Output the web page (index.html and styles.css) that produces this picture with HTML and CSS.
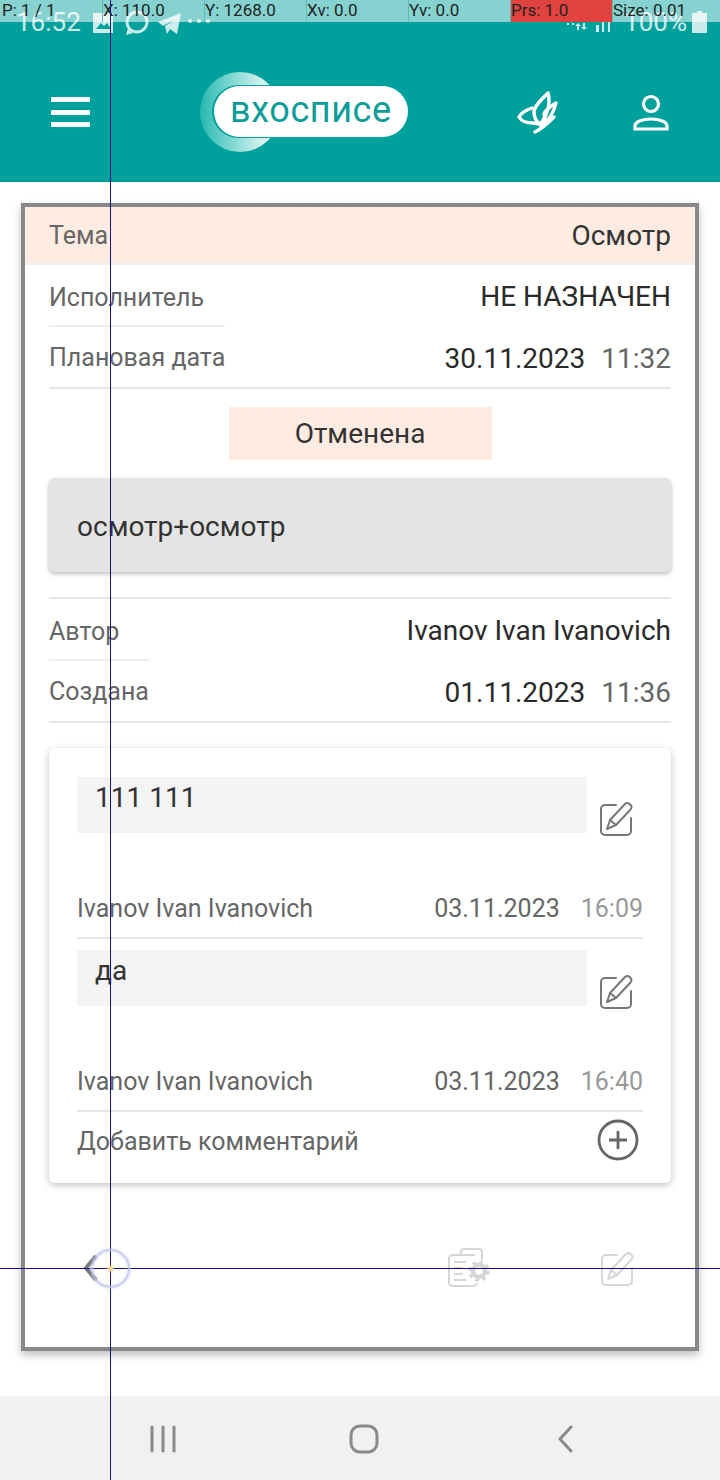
FILE: index.html
```html
<!DOCTYPE html>
<html lang="ru">
<head>
<meta charset="utf-8">
<title>Заявка</title>
<link rel="stylesheet" href="styles.css">
</head>
<body>
<div class="screen">
  <header class="app-header">
    <div class="status-bar">
      <span class="clock">16:52</span>
      <svg class="status-icons" width="92" height="28" viewBox="0 0 92 28">
        <path d="M0 5h20v20H0z" fill="#fff"/><path d="M3 21l5-6 3 3 3-3 4 6z" fill="#00a19d"/>
        <circle cx="44" cy="14" r="10" fill="none" stroke="#fff" stroke-width="2.800"/><path d="M33 27l2-7 5 5z" fill="#fff"/>
        <path d="M65 14L88 5l-4 21-7-5-3 5-2-8 11-7-13 7z" fill="#fff"/>
      </svg>
      <span class="dots"></span>
      <span class="dots"></span>
      <span class="dots"></span>
      <span class="status-spacer"></span>
      <svg class="signal" width="48" height="24" viewBox="0 0 48 24">
        <path d="M1 7q9-9 18 0M5 10q5-5 10 0" fill="none" stroke="#fff" stroke-width="2"/>
        <path d="M2 13h2v2H2zM7 13h2v2H7z" fill="#fff"/>
        <path d="M13 13l3 3h-2v4h-2v-4h-2zM19 20l-3-3h2v-4h2v4h2z" fill="#fff"/>
        <path d="M31 22h3v-7h-3zM37 22h2V10h-2zM43 22h2V7h-2z" fill="#fff"/>
      </svg>
      <span class="battery-text">100%</span>
      <svg class="battery" width="15" height="22" viewBox="0 0 15 22"><path d="M5 0h5v2h5v20H0V2h5z" fill="#fff"/></svg>
    </div>
    <button class="menu-btn" aria-label="Меню"><span></span><span></span><span></span></button>
    <svg class="logo" width="208" height="80" viewBox="0 0 208 80">
      <defs>
        <linearGradient id="ring" x1="0" x2="1" y1="0.5" y2="0.5">
          <stop offset="0" stop-color="#27b8ae"/><stop offset="0.25" stop-color="#5fcdc6"/><stop offset="0.85" stop-color="#e6f7f5"/>
        </linearGradient>
      </defs>
      <circle cx="40" cy="40" r="40" fill="url(#ring)"/>
      <rect x="12" y="13" width="197" height="53" rx="26.500" fill="#00a19d"/>
      <rect x="14" y="14" width="194" height="51" rx="25.500" fill="#fff"/>
      <text class="logo-text" x="30" y="50">вхосписе</text>
    </svg>
    <svg class="butterfly" width="42" height="44" viewBox="0 0 42 44" fill="none" stroke="#fff" stroke-width="3.400" stroke-linejoin="round" stroke-linecap="round">
      <path d="M31 3C25 9 17 16 17 22c0 6 3 10 6 12 7-8 11-20 8-31z"/>
      <path d="M15 18C9 20 4 23 2 27c3 5 8 6 14 6l6 1"/>
      <path d="M39 13c-5 3-10 6-12 11 2 4 0 7-2 10 7-4 12-12 14-21z"/>
      <path d="M37 27C32 32 26 38 18 42"/>
      <path d="M33 30L24 37"/>
    </svg>
    <svg class="user" width="38" height="40" viewBox="0 0 38 40" fill="none" stroke="#fff" stroke-width="3.200">
      <circle cx="19" cy="11" r="7.500"/>
      <path d="M3 36v-3c0-4 7-7 16-7s16 3 16 7v3z"/>
    </svg>
  </header>

  <main class="card">
    <div class="topic-row">
      <span class="label">Тема</span>
      <span class="topic-value">Осмотр</span>
    </div>
    <section class="section">
      <div class="row row-first">
        <span class="label label-short label-wide">Исполнитель</span>
        <span class="value">НЕ НАЗНАЧЕН</span>
      </div>
      <div class="row row-last">
        <span class="label">Плановая дата</span>
        <span class="value">30.11.2023<span class="time">11:32</span></span>
      </div>
      <div class="status-wrap"><div class="status">Отменена</div></div>
      <div class="description">осмотр+осмотр</div>
      <div class="divider"></div>
      <div class="row row-first">
        <span class="label label-short label-narrow">Автор</span>
        <span class="value">Ivanov Ivan Ivanovich</span>
      </div>
      <div class="row row-last">
        <span class="label">Создана</span>
        <span class="value">01.11.2023<span class="time">11:36</span></span>
      </div>

      <div class="comments">
        <article class="comment">
          <div class="comment-body">
            <div class="comment-text">111 111</div>
            <svg class="edit" width="34" height="36" viewBox="0 0 34 36"><use href="#edit-icon"/></svg>
          </div>
          <div class="comment-meta">
            <span class="author">Ivanov Ivan Ivanovich</span>
            <span class="date">03.11.2023</span>
            <span class="comment-time">16:09</span>
          </div>
        </article>
        <article class="comment">
          <div class="comment-body">
            <div class="comment-text">да</div>
            <svg class="edit" width="34" height="36" viewBox="0 0 34 36"><use href="#edit-icon"/></svg>
          </div>
          <div class="comment-meta">
            <span class="author">Ivanov Ivan Ivanovich</span>
            <span class="date">03.11.2023</span>
            <span class="comment-time">16:40</span>
          </div>
        </article>
        <div class="add-comment">
          <span>Добавить комментарий</span>
          <svg class="add-icon" width="42" height="42" viewBox="0 0 42 42" fill="none" stroke="#666" stroke-width="2.800">
            <circle cx="21" cy="21" r="19"/><path d="M12 21h18M21 12v18"/>
          </svg>
        </div>
      </div>

      <div class="actions">
        <svg class="back" width="14" height="28" viewBox="0 0 14 28" fill="none" stroke="#7a7a7a" stroke-width="4"><path d="M12 2L2 14l10 12"/></svg>
        <svg class="settings" width="44" height="40" viewBox="0 0 44 40" fill="none" stroke="#d6d6d6" stroke-width="2">
          <path d="M14 7V4q0-3 3-3h15q3 0 3 3v8"/>
          <path d="M28 7H6q-4 0-4 4v23q0 4 4 4h20q3 0 4-3"/>
          <path d="M7 14h12M7 20h9M7 26h9M7 32h12"/>
          <circle cx="32" cy="23" r="6" stroke-width="4.500"/>
          <circle cx="32" cy="23" r="9" stroke-width="3.500" stroke-dasharray="3.500 3.600"/>
        </svg>
        <svg class="edit-light" width="34" height="36" viewBox="0 0 34 36"><use href="#edit-icon"/></svg>
      </div>
    </section>
  </main>

  <nav class="nav-bar">
    <svg class="nav-recent" width="26" height="28" viewBox="0 0 26 28" fill="none" stroke="#8a8a8a" stroke-width="3" stroke-linecap="round"><path d="M2 2v24M13 2v24M24 2v24"/></svg>
    <svg class="nav-home" width="30" height="30" viewBox="0 0 30 30" fill="none" stroke="#8a8a8a" stroke-width="3"><rect x="2" y="2" width="26" height="26" rx="9"/></svg>
    <svg class="nav-back" width="16" height="28" viewBox="0 0 16 28" fill="none" stroke="#8a8a8a" stroke-width="3" stroke-linecap="round" stroke-linejoin="round"><path d="M13 2L2 14l11 12"/></svg>
  </nav>

  <div class="debug-bar">
    <span class="debug-cell">P: 1 / 1</span>
    <span class="debug-cell">X: 110.0</span>
    <span class="debug-cell">Y: 1268.0</span>
    <span class="debug-cell">Xv: 0.0</span>
    <span class="debug-cell">Yv: 0.0</span>
    <span class="debug-cell debug-red">Prs: 1.0</span>
    <span class="debug-cell">Size: 0.01</span>
  </div>
  <div class="cross-v"></div>
  <div class="cross-h"></div>
  <div class="touch"><span class="touch-dot"></span></div>

  <svg class="sprite" width="0" height="0">
    <symbol id="edit-icon" viewBox="0 0 34 36">
      <g fill="none" stroke="currentColor" stroke-width="2" stroke-linejoin="round" stroke-linecap="round">
        <path d="M17 5H6a4 4 0 0 0-4 4v22a4 4 0 0 0 4 4h22a4 4 0 0 0 4-4V18"/>
        <path d="M8 29l3-9L26 4q2.500-2 4.500 0l1 1q2 2 0 4.500L17 25zM11 20l6 5"/>
      </g>
    </symbol>
  </svg>
</div>
</body>
</html>
```
FILE: styles.css
```css
* { box-sizing: border-box; }
html, body { margin: 0; padding: 0; }
body { font-family: Roboto, "Noto Sans", sans-serif; background: #fff; color: #222; }
.screen { position: relative; width: 720px; height: 1480px; overflow: hidden; background: #fff; }

.app-header { position: relative; height: 182px; background: #00a19d; padding-top: 42px; display: flex; align-items: center; padding-left: 51px; }
.status-bar { position: absolute; left: 0; top: 0; width: 720px; height: 44px; padding: 0 13px 0 16px; display: flex; align-items: center; color: #fff; opacity: .8; }
.clock { font-size: 26px; width: 77px; }
.dots { width: 4px; height: 4px; border-radius: 50%; background: #fff; margin: 0 2.500px; position: relative; top: -1px; }
.dots:first-of-type { margin-left: 12px; }
.status-spacer { flex: 1; }
.signal { margin-right: 11px; }
.battery-text { font-size: 26px; margin-right: 5px; }

.menu-btn { width: 39px; height: 30px; padding: 0; border: 0; background: none; display: flex; flex-direction: column; justify-content: space-between; }
.menu-btn span { display: block; height: 5px; background: #fff; border-radius: 1px; }
.logo { margin-left: 110px; }
.logo-text { font-family: Roboto, sans-serif; font-size: 36px; fill: #0c9d99; letter-spacing: .6px; }
.butterfly { margin-left: 109px; }
.user { margin-left: 73px; margin-top: 2px; }

.card { margin: 21px 21px 0; width: 678px; height: 1148px; border: 4px solid #888; background: #fff; box-shadow: 0 4px 8px rgba(0,0,0,.25); }
.topic-row { height: 58px; background: #feece2; border-bottom: 2px solid #eee; padding: 0 24px; display: flex; justify-content: space-between; align-items: center; }
.label { font-size: 25px; color: #666; }
.topic-value { font-size: 28px; color: #333; }
.section { padding: 0 24px; }
.row { height: 62px; display: flex; justify-content: space-between; align-items: center; }
.row .label { line-height: 60px; }
.row-first { align-items: flex-start; }
.row-first .value { line-height: 64px; }
.label-short { height: 62px; border-bottom: 2px solid #eee; }
.row-first .label-short { line-height: 66px; }
.label-wide { width: 176px; }
.label-narrow { width: 100px; }
.row-last { border-bottom: 2px solid #e6e6e6; padding-top: 2px; }
.value { font-size: 28px; color: #2a2a2a; }
.time { color: #666; margin-left: 16px; }

.status-wrap { display: flex; justify-content: center; padding-top: 18px; }
.status { width: 263px; height: 53px; background: #feece2; display: flex; align-items: center; justify-content: center; font-size: 28px; line-height: 52px; color: #333; }
.description { margin-top: 18px; height: 94px; background: #e4e4e4; border-radius: 5px; box-shadow: 0 2px 4px rgba(0,0,0,.25); padding: 2px 28px 0; display: flex; align-items: center; font-size: 28px; color: #333; }
.divider { height: 2px; background: #e6e6e6; margin-top: 25px; }

.comments { margin-top: 25px; height: 435px; background: #fff; border-radius: 6px; box-shadow: 0 2px 7px rgba(0,0,0,.25); padding: 29px 28px 0; }
.comment { margin-bottom: 11px; }
.comment:last-of-type { margin-bottom: 0; }
.comment-body { display: flex; align-items: flex-start; height: 56px; }
.comment-text { width: 510px; height: 56px; background: #f4f4f4; padding-left: 18px; font-size: 28px; line-height: 42px; color: #333; }
.edit { margin: 23px 0 0 12px; color: #777; }
.comment-meta { margin-top: 44px; height: 62px; padding-top: 2px; border-bottom: 2px solid #e6e6e6; display: flex; align-items: center; font-size: 25px; color: #666; }
.author { flex: 1; }
.date { margin-right: 21px; }
.comment-time { color: #999; }
.add-comment { height: 58px; display: flex; align-items: center; justify-content: space-between; font-size: 25px; color: #666; padding-right: 4px; }
.add-icon { margin-top: -2px; }

.actions { display: flex; align-items: center; margin-top: 66px; height: 38px; padding-left: 35px; }
.settings { margin-left: 349px; }
.edit-light { margin-left: 109px; color: #d6d6d6; }

.nav-bar { margin-top: 45px; height: 84px; padding-top: 2px; background: #f1f1f1; display: flex; align-items: center; padding-left: 150px; }
.nav-home { margin-left: 173px; }
.nav-back { margin-left: 179px; }

.debug-bar { position: absolute; left: 0; top: 0; width: 720px; height: 22px; display: grid; grid-template-columns: repeat(7, 102px); background: rgba(255,255,255,.52); }
.debug-cell { font-size: 17px; line-height: 21px; color: #222; border-left: 1px solid #5cbdb9; white-space: nowrap; }
.debug-cell:first-child { border-left: 0; padding-left: 2px; }
.debug-red { background: rgba(229,57,53,.94); }
.cross-v { position: absolute; left: 110px; top: 0; width: 1px; height: 1480px; background: #11118a; }
.cross-h { position: absolute; left: 0; top: 1268px; width: 720px; height: 1px; background: #11118a; }
.touch { position: absolute; left: 91px; top: 1249px; width: 39px; height: 39px; border-radius: 50%; border: 2px solid rgba(190,195,235,.8); box-shadow: 0 0 3px rgba(190,195,235,.8), inset 0 0 3px rgba(190,195,235,.7); display: flex; align-items: center; justify-content: center; }
.touch-dot { width: 5px; height: 5px; border-radius: 50%; background: #f6d98a; box-shadow: 0 0 4px #f6d98a; }
.sprite { position: absolute; }
```
